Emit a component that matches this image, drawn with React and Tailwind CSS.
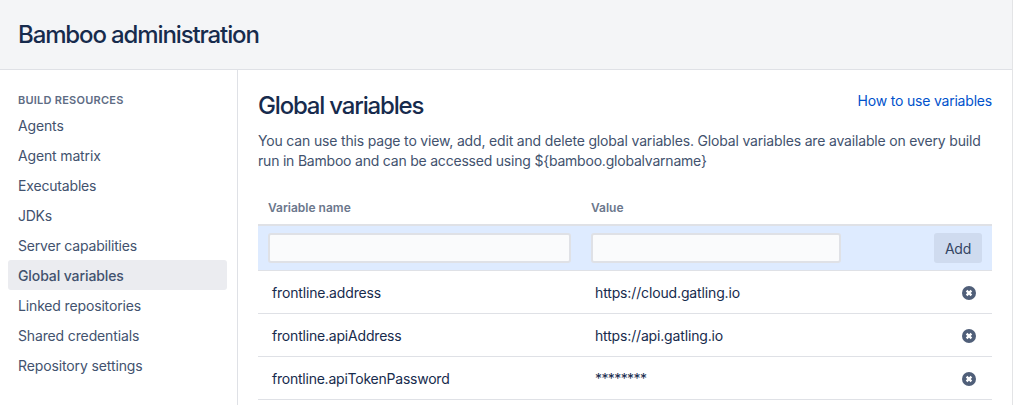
const links = [
  { label: 'Agents', spacing: 'tracking-[-0.14px]' },
  { label: 'Agent matrix', spacing: 'tracking-[-0.15px]' },
  { label: 'Executables', spacing: 'tracking-[-0.17px]' },
  { label: 'JDKs', spacing: 'tracking-[-0.25px]' },
  { label: 'Server capabilities', spacing: 'tracking-[-0.18px]' },
  { label: 'Global variables', spacing: 'tracking-[-0.1px]', active: true },
  { label: 'Linked repositories', spacing: 'tracking-[-0.15px]' },
  { label: 'Shared credentials', spacing: 'tracking-[-0.14px]' },
  { label: 'Repository settings', spacing: 'tracking-[-0.12px]' },
];

const variables = [
  { name: 'frontline.address', value: 'https://cloud.gatling.io', nameSpacing: 'tracking-[-0.16px]', valueSpacing: 'tracking-[-0.14px]' },
  { name: 'frontline.apiAddress', value: 'https://api.gatling.io', nameSpacing: 'tracking-[-0.19px]', valueSpacing: 'tracking-[-0.16px]' },
  { name: 'frontline.apiTokenPassword', value: '********', nameSpacing: 'tracking-[-0.23px]', valueSpacing: 'tracking-[-0.6px]' },
];

function RemoveIcon() {
  return (
    <svg className="block size-3.5" viewBox="0 0 14 14" aria-hidden="true">
      <circle cx="7" cy="7" r="7" fill="#505f79" />
      <path d="M4.6 4.6l4.8 4.8M9.4 4.6l-4.8 4.8" stroke="#fff" strokeWidth="2.3" />
    </svg>
  );
}

function Sidebar() {
  return (
    <nav className="w-[238px] shrink-0 border-r border-[#dfe1e6] pl-2 pt-5">
      <h2 className="pl-2.5 text-[11px] font-semibold leading-5 tracking-[0.24px] text-[#5e6c84]">BUILD RESOURCES</h2>
      <ul className="w-[219px]">
        {links.map((l) => (
          <li key={l.label}>
            <a
              className={`block h-[30px] rounded-[3px] px-2.5 leading-[31px] ${l.spacing} ${
                l.active ? 'bg-[#ebecf0] font-medium' : ''
              }`}
            >
              {l.label}
            </a>
          </li>
        ))}
      </ul>
    </nav>
  );
}

export default function App() {
  return (
    <div className="flex h-[405px] w-[1013px] flex-col overflow-hidden border-r border-[#e3e4e6] bg-white font-['Inter','Liberation_Sans',sans-serif] text-sm text-[#42526e]">
      <header className="flex h-[70px] shrink-0 items-center border-b border-[#dfe1e6] bg-[#f4f5f7] pl-[18px]">
        <h1 className="text-2xl font-medium leading-7 tracking-[-1.12px] text-[#172b4d]">Bamboo administration</h1>
      </header>
      <div className="flex min-h-0 flex-1">
        <Sidebar />
        <main className="min-w-0 flex-1 pl-5 pr-5 pt-5">
          <div className="flex items-start justify-between">
            <h2 className="pt-0.5 text-2xl font-medium leading-7 tracking-[-1.18px] text-[#172b4d]">Global variables</h2>
            <a className="pt-px leading-5 tracking-[-0.2px] text-[#0052cc]">How to use variables</a>
          </div>
          <p className="mt-[11px] whitespace-nowrap leading-5 tracking-[-0.17px]">
            You can use this page to view, add, edit and delete global variables. Global variables are available on every build
            <br />
            <span className="tracking-[-0.21px]">run in Bamboo and can be accessed using {'${bamboo.globalvarname}'}</span>
          </p>
          <div className="mt-[27px] flex h-[28px] border-b-2 border-[#dfe1e6] text-xs font-semibold leading-5 text-[#6b778c]">
            <div className="w-[323px] pl-2.5">Variable name</div>
            <div className="pl-2.5">Value</div>
          </div>
          <form className="flex h-[45px] items-center border-b border-[#dfe1e6] bg-[#deebff] px-2.5">
            <input className="h-[30px] w-[303px] rounded-[3px] border-2 border-[#dfe1e6] bg-[#fafbfc]" />
            <input className="ml-5 h-[30px] w-[250px] rounded-[3px] border-2 border-[#dfe1e6] bg-[#fafbfc]" />
            <button
              type="button"
              className="ml-auto h-[30px] w-12 rounded-[3px] bg-[#cfdbef] pt-0.5 tracking-[-0.2px] text-[#344563]"
            >
              Add
            </button>
          </form>
          {variables.map((v) => (
            <div key={v.name} className="flex h-[43px] items-center border-b border-[#dfe1e6] pl-3.5 pr-4 text-[#172b4d]">
              <div className={`w-[323px] pt-0.5 ${v.nameSpacing}`}>{v.name}</div>
              <div className={`flex-1 pt-0.5 ${v.valueSpacing}`}>{v.value}</div>
              <button type="button" aria-label="Delete" className="pt-0.5">
                <RemoveIcon />
              </button>
            </div>
          ))}
        </main>
      </div>
    </div>
  );
}
